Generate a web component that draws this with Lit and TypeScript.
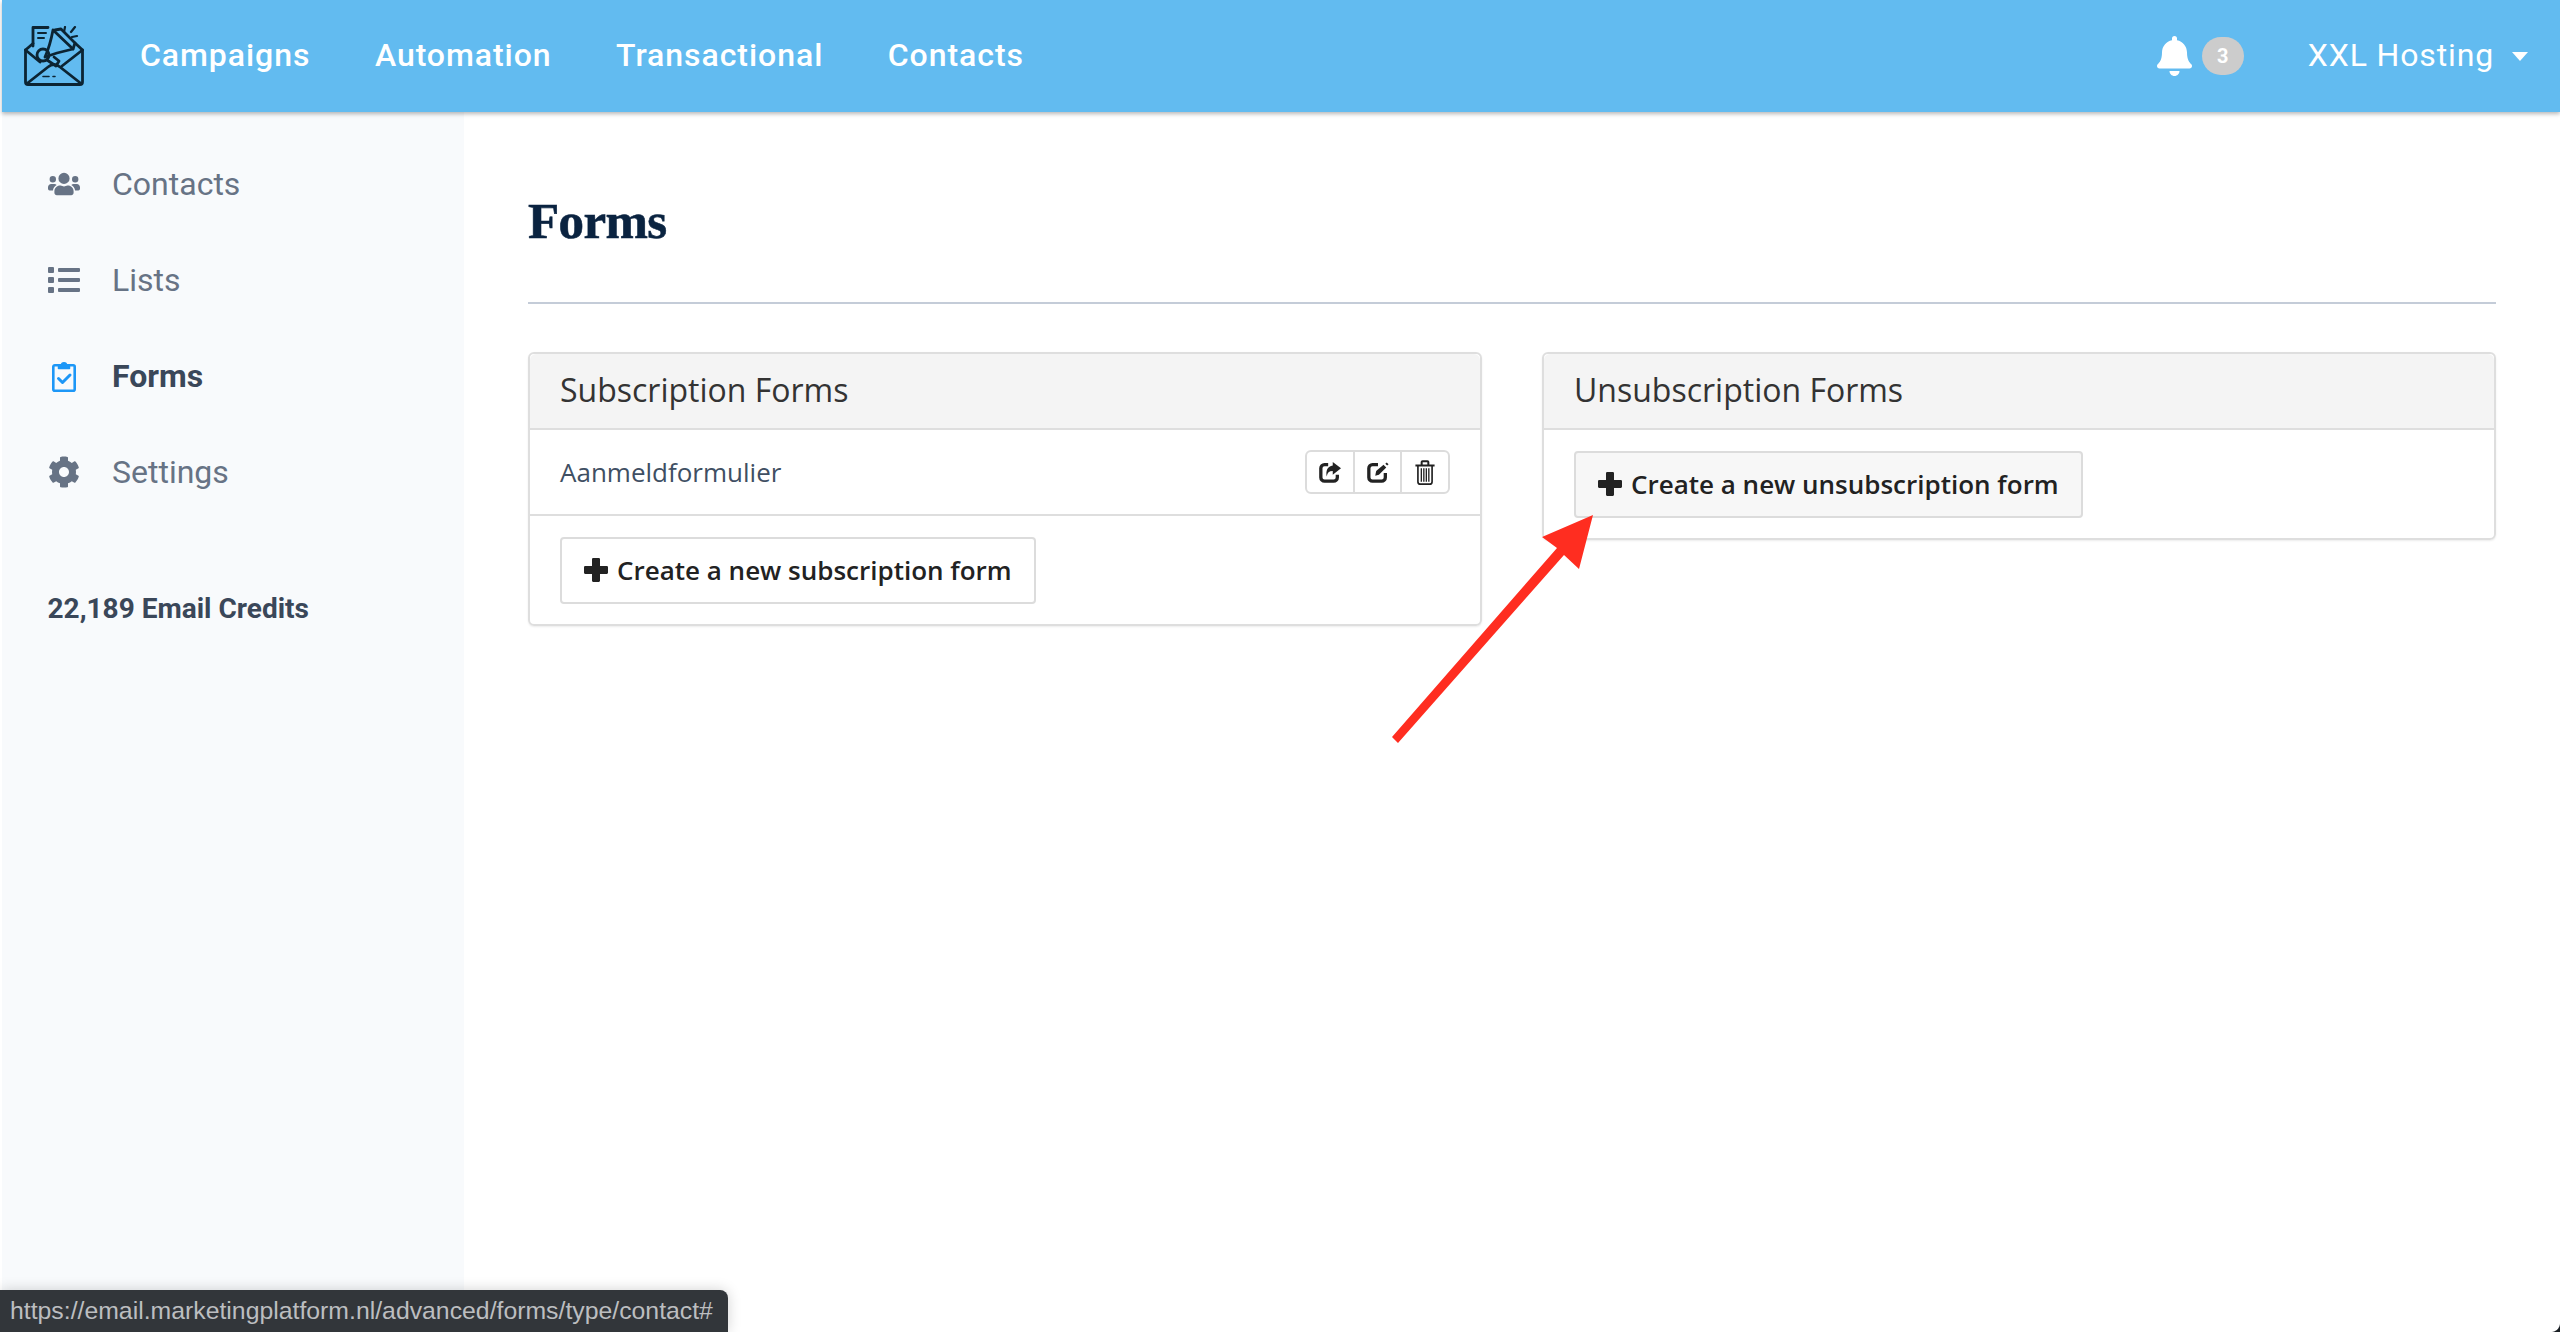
import { LitElement, html, css, svg } from "lit";
import { customElement } from "lit/decorators.js";

const logo = svg`<svg class="logo" viewBox="0 0 60 60" fill="none" stroke="#0c2433" stroke-width="2.800" stroke-linejoin="round" stroke-linecap="round">
<path d="M9 20V1.500H24"/><path d="M1.500 24L9 17.500M51 17L58.500 24M1.500 24V56a2.500 2.500 0 0 0 2.500 2.500H56a2.500 2.500 0 0 0 2.500-2.500V24"/>
<path d="M1.500 24L16 36M58.500 24L38 40M3 57.500L24 41Q30 36 36 41L57 57.500"/>
<path d="M14 7H22M14 12H20" stroke-width="2"/><path d="M19 50.500H25M29 50.500H31" stroke-width="1.600"/>
<path d="M29 4L49 23L33 27L21 31Q26 20 29 4Z"/><path d="M31 4L37 3L51 17L49 23"/><circle cx="19" cy="29" r="6"/><path d="M23 34L32 40L35 35L30 31"/>
<path d="M41 1L40 6M51 1L47 6M53 10L48 11" stroke-width="2.200"/></svg>`;

const users = svg`<svg class="i" viewBox="0 0 640 512" fill="currentColor"><path d="M96 224a64 64 0 1 0 0-128 64 64 0 0 0 0 128zm448 0a64 64 0 1 0 0-128 64 64 0 0 0 0 128zm32 32h-64c-17.600 0-33.500 7.100-45.100 18.600 40.300 22.100 68.900 62 75.100 109.400h66c17.700 0 32-14.300 32-32v-32c0-35.300-28.700-64-64-64zm-256 0a112 112 0 1 0 0-224 112 112 0 0 0 0 224zm76.800 32h-8.300c-20.800 10-43.900 16-68.500 16s-47.600-6-68.500-16h-8.300C179.600 288 128 339.600 128 403.200V432c0 26.500 21.500 48 48 48h288c26.500 0 48-21.500 48-48v-28.800c0-63.600-51.600-115.200-115.200-115.200zm-223.700-13.400C161.500 263.100 145.600 256 128 256H64c-35.300 0-64 28.700-64 64v32c0 17.700 14.300 32 32 32h65.900c6.300-47.400 34.900-87.300 75.200-109.400z"/></svg>`;
const list = svg`<svg class="i" viewBox="0 0 512 512" fill="currentColor"><path d="M80 368H16a16 16 0 0 0-16 16v64a16 16 0 0 0 16 16h64a16 16 0 0 0 16-16v-64a16 16 0 0 0-16-16zm0-320H16A16 16 0 0 0 0 64v64a16 16 0 0 0 16 16h64a16 16 0 0 0 16-16V64a16 16 0 0 0-16-16zm0 160H16a16 16 0 0 0-16 16v64a16 16 0 0 0 16 16h64a16 16 0 0 0 16-16v-64a16 16 0 0 0-16-16zm416 176H176a16 16 0 0 0-16 16v32a16 16 0 0 0 16 16h320a16 16 0 0 0 16-16v-32a16 16 0 0 0-16-16zm0-320H176a16 16 0 0 0-16 16v32a16 16 0 0 0 16 16h320a16 16 0 0 0 16-16V80a16 16 0 0 0-16-16zm0 160H176a16 16 0 0 0-16 16v32a16 16 0 0 0 16 16h320a16 16 0 0 0 16-16v-32a16 16 0 0 0-16-16z"/></svg>`;
const clip = svg`<svg class="i" viewBox="0 0 24 32" fill="none" stroke="currentColor" stroke-width="2.600" stroke-linejoin="round" stroke-linecap="round"><rect x="1.300" y="5.300" width="21.400" height="25.400" rx="1.500"/><path d="M6.500 8.500V5.300H9.500a2.500 2.500 0 0 1 5 0H17.500V8.500Z" fill="currentColor" stroke-width="1.500"/><path d="M6.500 18.500L10.500 22.500L18 15" stroke-width="3"/></svg>`;
const gear = svg`<svg class="i" viewBox="0 0 512 512" fill="currentColor"><path d="M487.400 315.700l-42.600-24.600c4.300-23.200 4.300-47 0-70.200l42.600-24.600c4.900-2.800 7.100-8.600 5.500-14-11.100-35.600-30-67.800-54.700-94.600-3.800-4.100-10-5.100-14.800-2.300L380.800 110c-17.900-15.400-38.500-27.300-60.800-35.100V25.800c0-5.600-3.900-10.500-9.400-11.700-36.700-8.200-74.300-7.800-109.200 0-5.500 1.200-9.400 6.100-9.400 11.700V75c-22.200 7.900-42.800 19.800-60.800 35.100L88.700 85.500c-4.900-2.800-11-1.900-14.800 2.300-24.700 26.700-43.600 58.900-54.700 94.600-1.700 5.400.6 11.200 5.500 14L67.300 221c-4.300 23.200-4.300 47 0 70.200l-42.600 24.600c-4.900 2.800-7.100 8.600-5.500 14 11.100 35.600 30 67.800 54.700 94.600 3.800 4.100 10 5.100 14.800 2.300l42.600-24.600c17.900 15.400 38.500 27.300 60.800 35.100v49.200c0 5.600 3.900 10.500 9.400 11.700 36.700 8.200 74.300 7.800 109.200 0 5.500-1.200 9.400-6.100 9.400-11.700v-49.200c22.200-7.900 42.800-19.800 60.800-35.100l42.600 24.600c4.900 2.800 11 1.900 14.800-2.300 24.700-26.700 43.600-58.900 54.700-94.600 1.500-5.500-.7-11.300-5.600-14.100zM256 336c-44.100 0-80-35.900-80-80s35.900-80 80-80 80 35.900 80 80-35.900 80-80 80z"/></svg>`;
const bell = svg`<svg class="bell" viewBox="0 0 448 512" fill="currentColor"><path d="M224 512c35.300 0 64-28.700 64-64H160c0 35.300 28.700 64 64 64zm215.400-149.700c-19.300-20.800-55.500-52-55.500-154.300 0-77.700-54.500-139.900-127.900-155.200V32a32 32 0 1 0-64 0v20.800C118.600 68.100 64.100 130.300 64.100 208c0 102.300-36.200 133.500-55.500 154.300-6 6.400-8.700 14.200-8.600 21.700.1 16.400 13 32 32.100 32h383.800c19.100 0 32-15.600 32.100-32 .1-7.500-2.600-15.200-8.600-21.700z"/></svg>`;
const plus = svg`<svg class="plus" viewBox="1.500 1.500 21 21" fill="currentColor"><path d="M8.500 2.500a1 1 0 0 1 1-1h5a1 1 0 0 1 1 1V8.500H21.500a1 1 0 0 1 1 1v5a1 1 0 0 1-1 1H15.500V21.500a1 1 0 0 1-1 1h-5a1 1 0 0 1-1-1V15.500H2.500a1 1 0 0 1-1-1v-5a1 1 0 0 1 1-1H8.500Z"/></svg>`;
const share = svg`<svg class="a" viewBox="0 0 24 24" fill="none" stroke="currentColor" stroke-width="3.600"><path d="M10 4H6a4 4 0 0 0-4 4V18a4 4 0 0 0 4 4H16a4 4 0 0 0 4-4V15"/><path d="M15 1L24 8L15 15V11C11 11 9 13 8.500 17C7 11 9.500 5.500 15 5Z" fill="currentColor" stroke="none"/></svg>`;
const edit = svg`<svg class="a" viewBox="0 0 24 24" fill="none" stroke="currentColor" stroke-width="3.600"><path d="M12 4H6a4 4 0 0 0-4 4V18a4 4 0 0 0 4 4H16a4 4 0 0 0 4-4V13"/><path d="M9 16L10 11L18 4L21 7L13 15Z" fill="currentColor" stroke="none"/><path d="M20 3L21.500 1.500L23.500 3.500L22 5Z" fill="currentColor" stroke="none"/></svg>`;
const trash = svg`<svg class="t" viewBox="0 0 24 30" fill="none" stroke="currentColor" stroke-width="2"><path d="M0.500 6.500H23.500M8 6V2.500a1 1 0 0 1 1-1H15a1 1 0 0 1 1 1V6" stroke-width="2.400"/><path d="M3.500 7V26a3 3 0 0 0 3 3H17.500a3 3 0 0 0 3-3V7"/><path d="M7.600 10V26M10.600 10V26M13.600 10V26M16.600 10V26" stroke-width="1.600"/></svg>`;

@customElement("app-root")
export class AppRoot extends LitElement {
  static styles = css`
    :host { display: block; width: 2560px; height: 1332px; position: relative; overflow: hidden; background: #fff; font-family: Roboto, sans-serif; }
    .top { height: 112px; margin-left: 2px; background: #62bbf0; box-shadow: 0 2px 4px rgba(0,0,0,.28); display: flex; align-items: center; color: #fff; position: relative; z-index: 2; }
    .logo { width: 60px; height: 60px; margin-left: 22px; margin-right: 56px; flex: none; }
    .nav { display: flex; gap: 64.500px; font-size: 32px; font-weight: 500; letter-spacing: .95px; padding-bottom: 3px; }
    .right { margin-left: auto; display: flex; align-items: center; padding-right: 32px; font-size: 32px; letter-spacing: .85px; }
    .name { padding-bottom: 3px; }
    .bell { width: 35px; height: 40px; }
    .count { width: 42px; height: 38px; border-radius: 19px; background: #ccc; margin-left: 10px; margin-right: 64px; display: flex; align-items: center; justify-content: center; font-size: 20px; font-weight: 700; letter-spacing: 0; }
    .caret { width: 0; height: 0; margin-left: 18px; border: 8px solid transparent; border-top: 9px solid #fff; border-bottom: 0; }
    .body { display: flex; height: 1220px; }
    .side { width: 462px; margin-left: 2px; background: #f8fafc; flex: none; padding-top: 24px; box-sizing: border-box; }
    .item { height: 96px; display: flex; align-items: center; padding-left: 45px; font-size: 32px; color: #677385; }
    .item .box { width: 34px; display: flex; justify-content: center; margin-right: 31px; }
    .i { height: 32px; width: 32px; }
    .item.on { color: #3a4759; font-weight: 700; }
    .item.on .box { color: #1d97f7; }
    .credits { margin: 69px 0 0 45.500px; font-size: 28px; font-weight: 700; color: #3a4759; line-height: 40px; }
    .main { flex: 1; padding: 0 64px; min-width: 0; }
    h1 { margin: 0; font-family: "Liberation Serif", serif; font-weight: 700; font-size: 51px; letter-spacing: -.6px; -webkit-text-stroke: .6px #0a2340; color: #0a2340; height: 190px; line-height: 218px; border-bottom: 2px solid #c4ccd8; }
    .cols { display: grid; grid-template-columns: 954px 954px; gap: 60px; margin-top: 48px; align-items: start; font-family: "Open Sans", sans-serif; }
    .card { border: 2px solid #dedede; border-radius: 6px; box-shadow: 0 1px 2px rgba(0,0,0,.08); }
    .head { height: 74px; box-sizing: border-box; background: #f4f4f4; display: flex; align-items: center; padding: 0 0 4px 30px; font-size: 32px; color: #333; border-radius: 6px 6px 0 0; }
    .rule { height: 2px; background: #dedede; }
    .row { height: 84px; box-sizing: border-box; display: flex; align-items: center; justify-content: space-between; padding: 0 30px; font-size: 26px; color: #3f4f63; }
    .foot { padding: 21px 30px 20px; }
    .btn { display: inline-flex; align-items: center; height: 67px; box-sizing: border-box; padding: 0 22px 1px; border: 2px solid #dcdcdc; border-radius: 4px; background: #fff; font-size: 26px; font-weight: 600; color: #222; }
    .btn.hover { background: #f7f7f7; }
    .plus { width: 24px; height: 24px; margin-right: 9px; color: #222; }
    .group { display: flex; border: 2px solid #dcdcdc; border-radius: 6px; height: 44px; box-sizing: border-box; color: #222; }
    .group span { width: 45.600px; display: flex; align-items: center; justify-content: center; }
    .group span + span { border-left: 2px solid #dcdcdc; }
    .a { width: 22px; height: 22px; }
    .t { width: 20px; height: 25px; }
    .status { position: absolute; left: 0; bottom: 0; z-index: 3; width: 728px; height: 42px; box-sizing: border-box; background: #32363a; border-radius: 0 8px 0 0; color: #bcbec0; font-family: "Liberation Sans", sans-serif; font-size: 24.800px; line-height: 42px; padding-left: 10px; white-space: nowrap; box-shadow: 0 0 14px rgba(0,0,0,.18); }
    .arrow { position: absolute; left: 1380px; top: 500px; width: 240px; height: 250px; z-index: 3; }
    .corner { position: absolute; right: 0; bottom: 0; width: 9px; height: 9px; z-index: 3; background: radial-gradient(circle at 0 0, transparent 8.500px, #1a1f24 9.500px); }
  `;

  render() {
    return html`
      <div class="top">
        ${logo}
        <div class="nav"><span>Campaigns</span><span>Automation</span><span>Transactional</span><span>Contacts</span></div>
        <div class="right">${bell}<span class="count">3</span><span class="name">XXL Hosting</span><span class="caret"></span></div>
      </div>
      <div class="body">
        <div class="side">
          <div class="item"><span class="box">${users}</span>Contacts</div>
          <div class="item"><span class="box">${list}</span>Lists</div>
          <div class="item on"><span class="box">${clip}</span>Forms</div>
          <div class="item"><span class="box">${gear}</span>Settings</div>
          <div class="credits">22,189 Email Credits</div>
        </div>
        <div class="main">
          <h1>Forms</h1>
          <div class="cols">
            <div class="card">
              <div class="head">Subscription Forms</div>
              <div class="rule"></div>
              <div class="row"><span>Aanmeldformulier</span><div class="group"><span>${share}</span><span>${edit}</span><span>${trash}</span></div></div>
              <div class="rule"></div>
              <div class="foot"><div class="btn">${plus}Create a new subscription form</div></div>
            </div>
            <div class="card">
              <div class="head">Unsubscription Forms</div>
              <div class="rule"></div>
              <div class="foot"><div class="btn hover">${plus}Create a new unsubscription form</div></div>
            </div>
          </div>
        </div>
      </div>
      <svg class="arrow" viewBox="1380 500 240 250" fill="#ff2d20"><path d="M1392 737L1557 548L1542 537L1593 515L1579 569L1564 555L1398 743Z"/></svg>
      <div class="status">https://email.marketingplatform.nl/advanced/forms/type/contact#</div>
      <div class="corner"></div>
    `;
  }
}
